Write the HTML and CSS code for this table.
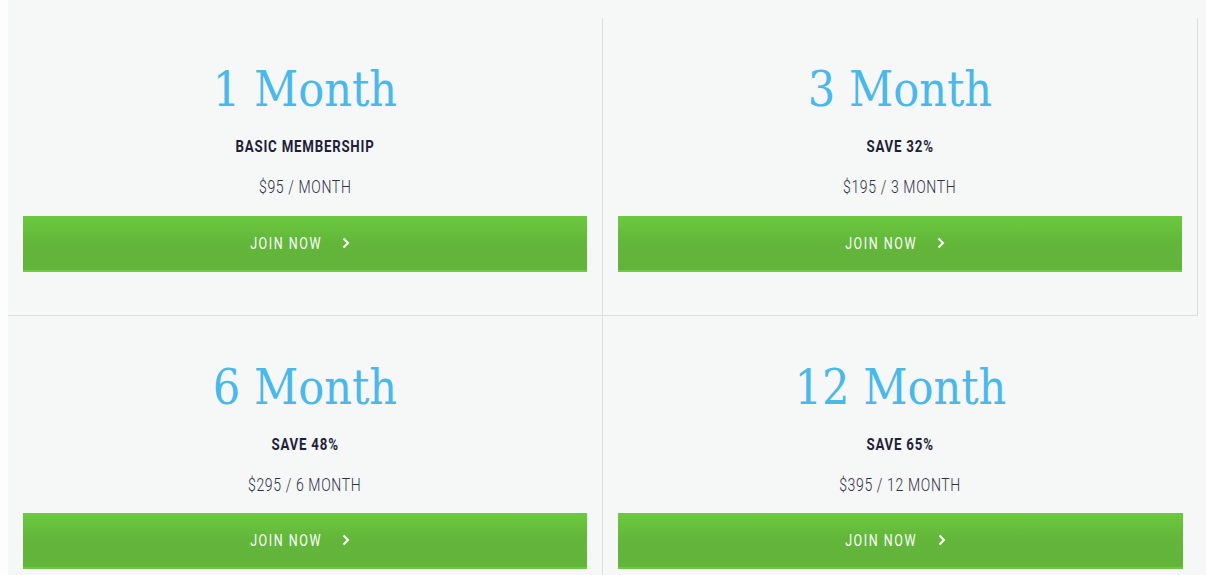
FILE: index.html
```html
<!DOCTYPE html>
<html lang="en">
<head>
    <meta charset="UTF-8">
    <title>Membership Plans</title>
    <link rel="stylesheet" href="styles.css">
</head>
<body>
    <div class="plans-wrap">
        <div class="plans-grid">
            <div class="plan">
                <div class="plan-title">1 Month</div>
                <div class="plan-sub"><span>Basic Membership</span></div>
                <div class="plan-price"><span>$95 / Month</span></div>
                <a class="join-btn" href="#"><span>Join Now</span>
                    <svg class="chev" viewBox="0 0 8 12"><polyline points="1.5,1.5 6,6 1.5,10.5" fill="none" stroke="#fff" stroke-width="2"/></svg>
                </a>
            </div>
            <div class="plan">
                <div class="plan-title">3 Month</div>
                <div class="plan-sub"><span>Save 32%</span></div>
                <div class="plan-price"><span>$195 / 3 Month</span></div>
                <a class="join-btn" href="#"><span>Join Now</span>
                    <svg class="chev" viewBox="0 0 8 12"><polyline points="1.5,1.5 6,6 1.5,10.5" fill="none" stroke="#fff" stroke-width="2"/></svg>
                </a>
            </div>
            <div class="plan">
                <div class="plan-title">6 Month</div>
                <div class="plan-sub"><span>Save 48%</span></div>
                <div class="plan-price"><span>$295 / 6 Month</span></div>
                <a class="join-btn" href="#"><span>Join Now</span>
                    <svg class="chev" viewBox="0 0 8 12"><polyline points="1.5,1.5 6,6 1.5,10.5" fill="none" stroke="#fff" stroke-width="2"/></svg>
                </a>
            </div>
            <div class="plan">
                <div class="plan-title">12 Month</div>
                <div class="plan-sub"><span>Save 65%</span></div>
                <div class="plan-price"><span>$395 / 12 Month</span></div>
                <a class="join-btn" href="#"><span>Join Now</span>
                    <svg class="chev" viewBox="0 0 8 12"><polyline points="1.5,1.5 6,6 1.5,10.5" fill="none" stroke="#fff" stroke-width="2"/></svg>
                </a>
            </div>
        </div>
    </div>
</body>
</html>
```

FILE: styles.css
```css
html, body {
    margin: 0;
    padding: 0;
    background-color: #fdfdfd;
}
.plans-wrap {
    margin-left: 8px;
    background-color: #f6f7f7;
    padding-top: 18px;
    height: 557px;
    overflow: hidden;
}
.plans-grid {
    display: grid;
    grid-template-columns: 595px 595px;
    width: 1190px;
}
.plan {
    display: flex;
    flex-direction: column;
    align-items: center;
    padding: 44px 15px 43px;
    border-right: 1px solid #dedede;
    border-bottom: 1px solid #dedede;
    box-sizing: border-box;
    height: 298px;
}
.plan:nth-child(n+3) {
    border-bottom: none;
    padding-bottom: 45px;
}
.plan:nth-child(4) {
    border-right: none;
}
.plan-title {
    font-family: "DejaVu Serif Condensed", "DejaVu Serif", serif;
    font-size: 48px;
    line-height: 54px;
    color: #4ab9e9;
    font-weight: normal;
}
.plan-sub,
.plan-price {
    font-family: Roboto, "DejaVu Sans", sans-serif;
    text-transform: uppercase;
    line-height: 20px;
}
.plan-sub span,
.plan-price span,
.join-btn span {
    display: inline-block;
    transform: scaleX(0.78);
}
.plan-sub {
    margin-top: 20px;
    font-weight: bold;
    font-size: 17px;
    letter-spacing: 1px;
    color: #1f1f3a;
}
.plan-price {
    margin-top: 21px;
    font-weight: 300;
    font-size: 18px;
    letter-spacing: 0.8px;
    color: #2f2f44;
}
.join-btn {
    margin-top: auto;
    align-self: stretch;
    height: 56px;
    padding-right: 20px;
    display: flex;
    align-items: center;
    justify-content: center;
    background: linear-gradient(#6cc93f, #62b63a 50%, #62b43a);
    border-bottom: 2px solid #6ccc3f;
    box-sizing: border-box;
    color: #fff;
    text-decoration: none;
    font-family: Roboto, "DejaVu Sans", sans-serif;
    font-size: 16px;
    letter-spacing: 2px;
    text-transform: uppercase;
}
.chev {
    width: 8px;
    height: 12px;
    margin-left: 10px;
}
```
